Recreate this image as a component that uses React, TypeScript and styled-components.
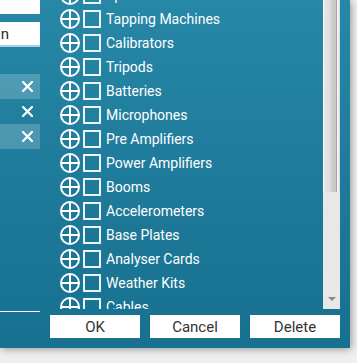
import React, { useLayoutEffect, useRef } from "react";
import styled, { createGlobalStyle } from "styled-components";

const Global = createGlobalStyle`
  html, body { margin: 0; padding: 0; background: #f0f0f0; overflow: hidden; }
  body { font-family: Roboto, "Noto Sans", sans-serif; }
`;

const Page = styled.div`
  width: 357px;
  height: 363px;
  background: #f0f0f0;
`;

const Dialog = styled.div`
  width: 350px;
  height: 348px;
  display: flex;
  background: linear-gradient(180deg, #2787a6 0%, #1f7b9b 50%, #17708f 100%);
  box-shadow: 1px 1px 8px rgba(0, 0, 0, 0.4);
`;

const LeftPanel = styled.div`
  width: 40px;
  display: flex;
  flex-direction: column;
  overflow: hidden;
`;

const TopInput = styled.div`
  height: 14px;
  background: #ffffff;
`;

const TextInput = styled.div`
  margin-top: 8px;
  height: 23px;
  background: #ffffff;
  border-bottom: 2px solid #a8d2e2;
  display: flex;
  justify-content: flex-end;
  align-items: center;
  padding-right: 31px;
  overflow: hidden;
  white-space: nowrap;
  font-size: 15px;
  color: #2b2b2b;
`;

const SelectedList = styled.div`
  margin-top: 27px;
  display: flex;
  flex-direction: column;
`;

const SelectedRow = styled.div<{ $shaded: boolean }>`
  height: 25px;
  display: flex;
  align-items: center;
  justify-content: flex-end;
  padding-right: 7px;
  background: ${(p) => (p.$shaded ? "rgba(255,255,255,0.2)" : "transparent")};
`;

const Spacer = styled.div`
  flex: 1;
`;

const Divider = styled.div`
  height: 1px;
  background: #ffffff;
  margin-bottom: 36px;
`;

const MainArea = styled.div`
  flex: 1;
  margin-left: 10px;
  margin-right: 10px;
  display: flex;
  flex-direction: column;
`;

const ListArea = styled.div`
  height: 309px;
  display: flex;
`;

const TreeViewport = styled.div`
  flex: 1;
  overflow: hidden;
`;

const TreeRow = styled.div`
  height: 24px;
  display: flex;
  align-items: center;
  padding-left: 10px;
  padding-top: 1px;
  box-sizing: border-box;
  color: #ffffff;
  font-size: 14px;
  white-space: nowrap;
`;

const Expander = styled.svg`
  width: 20px;
  height: 20px;
  flex: none;
`;

const CheckBox = styled.div`
  width: 14px;
  height: 14px;
  border: 2px solid #eef5f8;
  margin-left: 3px;
  margin-right: 5px;
  flex: none;
`;

const ScrollBar = styled.div`
  width: 17px;
  background: #e8e8e8;
  display: flex;
  flex-direction: column;
`;

const Thumb = styled.div`
  height: 192px;
  background: linear-gradient(
    90deg,
    #ffffff 0px,
    #ffffff 1px,
    #e6e6e6 1.5px,
    #dddddd 7px,
    #cdcdcd 9px,
    #c9c9c9 12.5px,
    #a6a6a6 13px,
    #a6a6a6 14px,
    #f2f2f2 14.5px,
    #eeeeee 16px,
    #c8c8c8 17px
  );
`;

const Track = styled.div`
  flex: 1;
  display: flex;
  align-items: flex-end;
  justify-content: center;
  padding-bottom: 8px;
`;

const Arrow = styled.div`
  width: 0;
  height: 0;
  border-left: 4px solid transparent;
  border-right: 4px solid transparent;
  border-top: 4px solid #8a8a8a;
`;

const ButtonRow = styled.div`
  margin-top: 6px;
  display: flex;
  gap: 10px;
`;

const Button = styled.button`
  width: 90px;
  height: 23px;
  border: none;
  background: #ffffff;
  color: #333333;
  font-family: Roboto, "Noto Sans", sans-serif;
  font-size: 15px;
  padding: 0;
  display: flex;
  align-items: center;
  justify-content: center;
`;

const CloseIcon = () => (
  <svg width="11" height="11" viewBox="0 0 11 11">
    <path d="M1 1 L10 10 M10 1 L1 10" stroke="#ffffff" strokeWidth="2.2" strokeLinecap="square" />
  </svg>
);

const PlusCircle = () => (
  <Expander viewBox="0 0 20 20">
    <circle cx="10" cy="10" r="9" fill="none" stroke="#ffffff" strokeWidth="2" />
    <path d="M10 1 V19 M1 10 H19" stroke="#ffffff" strokeWidth="2" />
  </Expander>
);

const items = [
  "Speakers",
  "Tapping Machines",
  "Calibrators",
  "Tripods",
  "Batteries",
  "Microphones",
  "Pre Amplifiers",
  "Power Amplifiers",
  "Booms",
  "Accelerometers",
  "Base Plates",
  "Analyser Cards",
  "Weather Kits",
  "Cables",
  "Software",
  "Adaptors",
];

export default function App() {
  const treeRef = useRef<HTMLDivElement>(null);
  useLayoutEffect(() => {
    if (treeRef.current) treeRef.current.scrollTop = 18;
  }, []);

  return (
    <Page>
      <Global />
      <Dialog>
        <LeftPanel>
          <TopInput />
          <TextInput>Hallan</TextInput>
          <SelectedList>
            {[true, false, true].map((s, i) => (
              <SelectedRow key={i} $shaded={s}>
                <CloseIcon />
              </SelectedRow>
            ))}
          </SelectedList>
          <Spacer />
          <Divider />
        </LeftPanel>
        <MainArea>
          <ListArea>
            <TreeViewport ref={treeRef}>
              {items.map((name) => (
                <TreeRow key={name}>
                  <PlusCircle />
                  <CheckBox />
                  {name}
                </TreeRow>
              ))}
            </TreeViewport>
            <ScrollBar>
              <Thumb />
              <Track>
                <Arrow />
              </Track>
            </ScrollBar>
          </ListArea>
          <ButtonRow>
            <Button>OK</Button>
            <Button>Cancel</Button>
            <Button>Delete</Button>
          </ButtonRow>
        </MainArea>
      </Dialog>
    </Page>
  );
}
